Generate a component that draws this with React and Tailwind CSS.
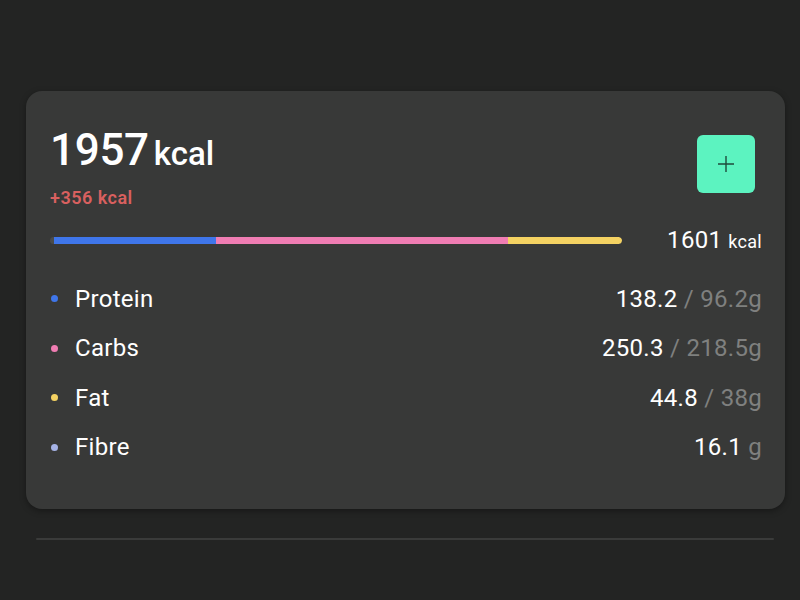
import React from 'react';

const macros = [
  { name: 'Protein', dot: 'bg-[#3f76ea]', value: '138.2', goal: ' / 96.2g' },
  { name: 'Carbs', dot: 'bg-[#f07db3]', value: '250.3', goal: ' / 218.5g' },
  { name: 'Fat', dot: 'bg-[#f4d262]', value: '44.8', goal: ' / 38g' },
  { name: 'Fibre', dot: 'bg-[#a6b3e6]', value: '16.1', goal: ' g' },
];

const App = () => {
  return (
    <div className="min-h-screen w-full bg-[#232423] pt-[91px] font-['Roboto',sans-serif]">
      <div className="mx-[15px] ml-[26px] rounded-[16px] bg-[#383938] pl-[24px] pr-[23px] pt-[30px] pb-[37px] shadow-[0_2px_6px_rgba(0,0,0,0.35)]">
        {/* header */}
        <div className="flex items-start justify-between">
          <div>
            <div className="flex items-baseline text-white">
              <span className="text-[44px] leading-[58px] font-medium tracking-[-0.3px]">1957</span>
              <span className="ml-[5px] text-[33px] font-medium">kcal</span>
            </div>
            <div className="mt-[8px] text-[18px] font-semibold tracking-[0.5px] text-[#d9605f] leading-[22px]">+356 kcal</div>
          </div>
          <button className="mr-[7px] mt-[14px] flex h-[58px] w-[58px] items-center justify-center rounded-[6px] bg-[#5cf3c0]">
            <svg width="20" height="20" viewBox="0 0 20 20" fill="none" stroke="#1f4a3b" strokeWidth="1.4">
              <path d="M10 2v16M2 10h16" />
            </svg>
          </button>
        </div>

        {/* bar */}
        <div className="mt-[13px] flex items-center justify-between">
          <div className="flex h-[7px] w-[572px] overflow-hidden rounded-full bg-[#4a4b4a]">
            <div className="ml-[4px] w-[162px] bg-[#3f76ea]" />
            <div className="w-[292px] bg-[#f07db3]" />
            <div className="w-[114px] rounded-r-full bg-[#f4d262]" />
          </div>
          <div className="flex items-baseline text-white tracking-[0.3px]">
            <span className="text-[24px]">1601</span>
            <span className="ml-[6px] text-[18px]">kcal</span>
          </div>
        </div>

        {/* macros */}
        <div className="mt-[16px] flex flex-col">
          {macros.map((m) => (
            <div key={m.name} className="flex h-[49.5px] items-center justify-between">
              <div className="flex items-center">
                <span className={`ml-[1px] h-[7px] w-[7px] rounded-full ${m.dot}`} />
                <span className="ml-[17px] text-[24px] tracking-[0.3px] text-white">{m.name}</span>
              </div>
              <div className="text-[24px] tracking-[0.3px]">
                <span className="text-white">{m.value}</span>
                <span className="text-[#7f807f]">{m.goal}</span>
              </div>
            </div>
          ))}
        </div>
      </div>

      <div className="mx-[26px] mt-[29px] ml-[36px] h-[2px] rounded-full bg-[#3a3b3a]" />
    </div>
  );
};

export default App;
